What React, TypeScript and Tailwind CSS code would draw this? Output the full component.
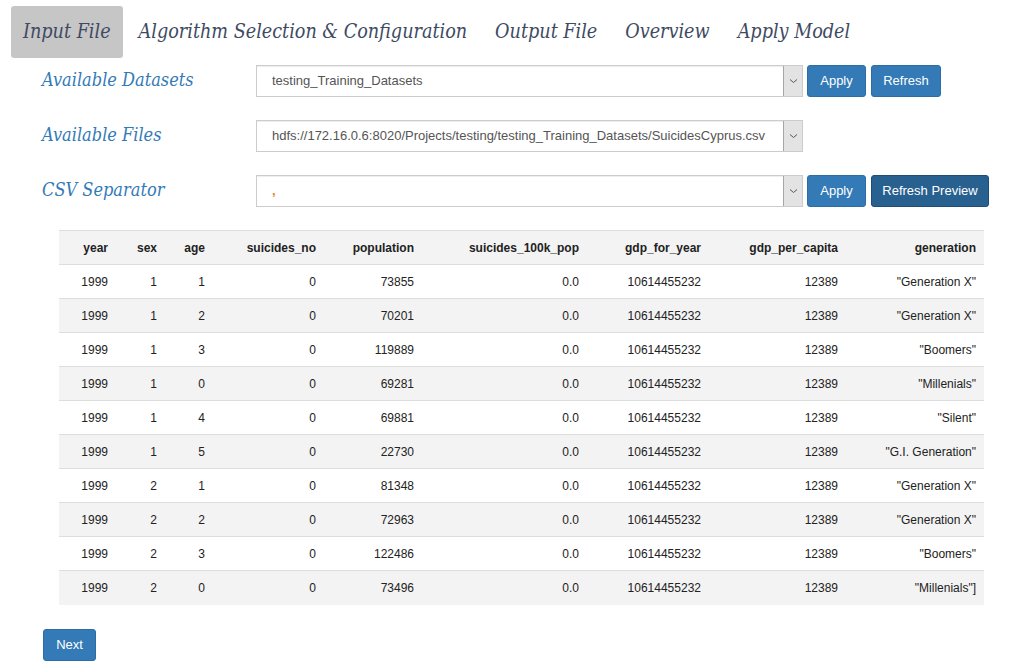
import React from "react";

const tabs = ["Input File", "Algorithm Selection & Configuration", "Output File", "Overview", "Apply Model"];

const cols = [
  { name: "year", w: 57 },
  { name: "sex", w: 49 },
  { name: "age", w: 48 },
  { name: "suicides_no", w: 111 },
  { name: "population", w: 98 },
  { name: "suicides_100k_pop", w: 165 },
  { name: "gdp_for_year", w: 122 },
  { name: "gdp_per_capita", w: 137 },
  { name: "generation", w: 138 },
];

const rows: string[][] = [
  ["1999", "1", "1", "0", "73855", "0.0", "10614455232", "12389", '"Generation X"'],
  ["1999", "1", "2", "0", "70201", "0.0", "10614455232", "12389", '"Generation X"'],
  ["1999", "1", "3", "0", "119889", "0.0", "10614455232", "12389", '"Boomers"'],
  ["1999", "1", "0", "0", "69281", "0.0", "10614455232", "12389", '"Millenials"'],
  ["1999", "1", "4", "0", "69881", "0.0", "10614455232", "12389", '"Silent"'],
  ["1999", "1", "5", "0", "22730", "0.0", "10614455232", "12389", '"G.I. Generation"'],
  ["1999", "2", "1", "0", "81348", "0.0", "10614455232", "12389", '"Generation X"'],
  ["1999", "2", "2", "0", "72963", "0.0", "10614455232", "12389", '"Generation X"'],
  ["1999", "2", "3", "0", "122486", "0.0", "10614455232", "12389", '"Boomers"'],
  ["1999", "2", "0", "0", "73496", "0.0", "10614455232", "12389", '"Millenials"]'],
];

function Select({ value, width, orange }: { value: string; width: number; orange?: boolean }) {
  return (
    <div
      className="h-[32px] flex items-stretch border border-[#cccccc] bg-white shadow-[inset_0_1px_1px_rgba(0,0,0,0.075)]"
      style={{ width }}
    >
      <div className={`flex-1 flex items-center pl-[15px] text-[13px] ${orange ? "text-[#e0883a] font-bold" : "text-[#555555]"}`}>
        {value}
      </div>
      <div className="w-[19px] bg-[#e3e3e3] border-l border-[#a6a6a6] flex items-center justify-center">
        <svg width="9" height="6" viewBox="0 0 9 6">
          <path d="M1 1.5 L4.5 4.5 L8 1.5" fill="none" stroke="#555" strokeWidth="1" />
        </svg>
      </div>
    </div>
  );
}

function Btn({ children, dark, width }: { children: React.ReactNode; dark?: boolean; width: number }) {
  return (
    <button
      className={`h-[32px] rounded-[3px] text-white text-[13px] border ${
        dark ? "bg-[#286090] border-[#204d74]" : "bg-[#337ab7] border-[#2e6da4]"
      }`}
      style={{ width }}
    >
      {children}
    </button>
  );
}

const serif = "font-['DejaVu_Serif_Condensed','DejaVu_Serif',Georgia,serif] italic";

export default function App() {
  return (
    <div className="w-[1013px] h-[668px] bg-white overflow-hidden font-['Liberation_Sans',Arial,sans-serif] text-[#333333]">
      <div className="flex pl-[11px] pt-[6px]">
        {tabs.map((t, i) => (
          <div
            key={t}
            className={`h-[52px] px-[12px] mr-[4px] pb-[1px] flex items-center rounded-[3px] ${serif} text-[19.6px] text-[#3e4a62] ${
              i === 0 ? "bg-[#c6c6c6]" : ""
            }`}
          >
            {t}
          </div>
        ))}
      </div>

      <div className="pl-[42px] pt-[7px]">
        <div className="flex items-center h-[32px]">
          <div className={`w-[214px] ${serif} text-[18px] text-[#337ab7] pb-[3px]`}>Available Datasets</div>
          <Select value="testing_Training_Datasets" width={547} />
          <div className="ml-[4px] flex gap-[5px]">
            <Btn width={59}>Apply</Btn>
            <Btn width={70}>Refresh</Btn>
          </div>
        </div>
        <div className="flex items-center h-[33px] mt-[22px]">
          <div className={`w-[214px] ${serif} text-[18px] text-[#337ab7] pb-[3px]`}>Available Files</div>
          <Select value="hdfs://172.16.0.6:8020/Projects/testing/testing_Training_Datasets/SuicidesCyprus.csv" width={547} />
        </div>
        <div className="flex items-center h-[33px] mt-[22px]">
          <div className={`w-[214px] ${serif} text-[18px] text-[#337ab7] pb-[3px]`}>CSV Separator</div>
          <Select value="," width={547} orange />
          <div className="ml-[4px] flex gap-[5px]">
            <Btn width={59}>Apply</Btn>
            <Btn width={118} dark>Refresh Preview</Btn>
          </div>
        </div>
      </div>

      <div className="ml-[59px] mt-[23px] w-[925px]">
        <table className="w-[925px] border-collapse table-fixed text-[12px] text-[#222]">
          <colgroup>
            {cols.map((c) => (
              <col key={c.name} style={{ width: c.w }} />
            ))}
          </colgroup>
          <thead>
            <tr className="bg-[#f3f3f3] h-[34px] border-t border-[#dddddd]">
              {cols.map((c) => (
                <th key={c.name} className="text-right pr-[8px] font-bold">
                  {c.name}
                </th>
              ))}
            </tr>
          </thead>
          <tbody>
            {rows.map((r, i) => (
              <tr key={i} className={`h-[34px] border-t border-[#dddddd] ${i % 2 === 1 ? "bg-[#f3f3f3]" : "bg-white"}`}>
                {r.map((v, j) => (
                  <td key={j} className="text-right pr-[8px]">
                    {v}
                  </td>
                ))}
              </tr>
            ))}
          </tbody>
        </table>
      </div>

      <div className="ml-[43px] mt-[24px]">
        <Btn width={53}>Next</Btn>
      </div>
    </div>
  );
}
